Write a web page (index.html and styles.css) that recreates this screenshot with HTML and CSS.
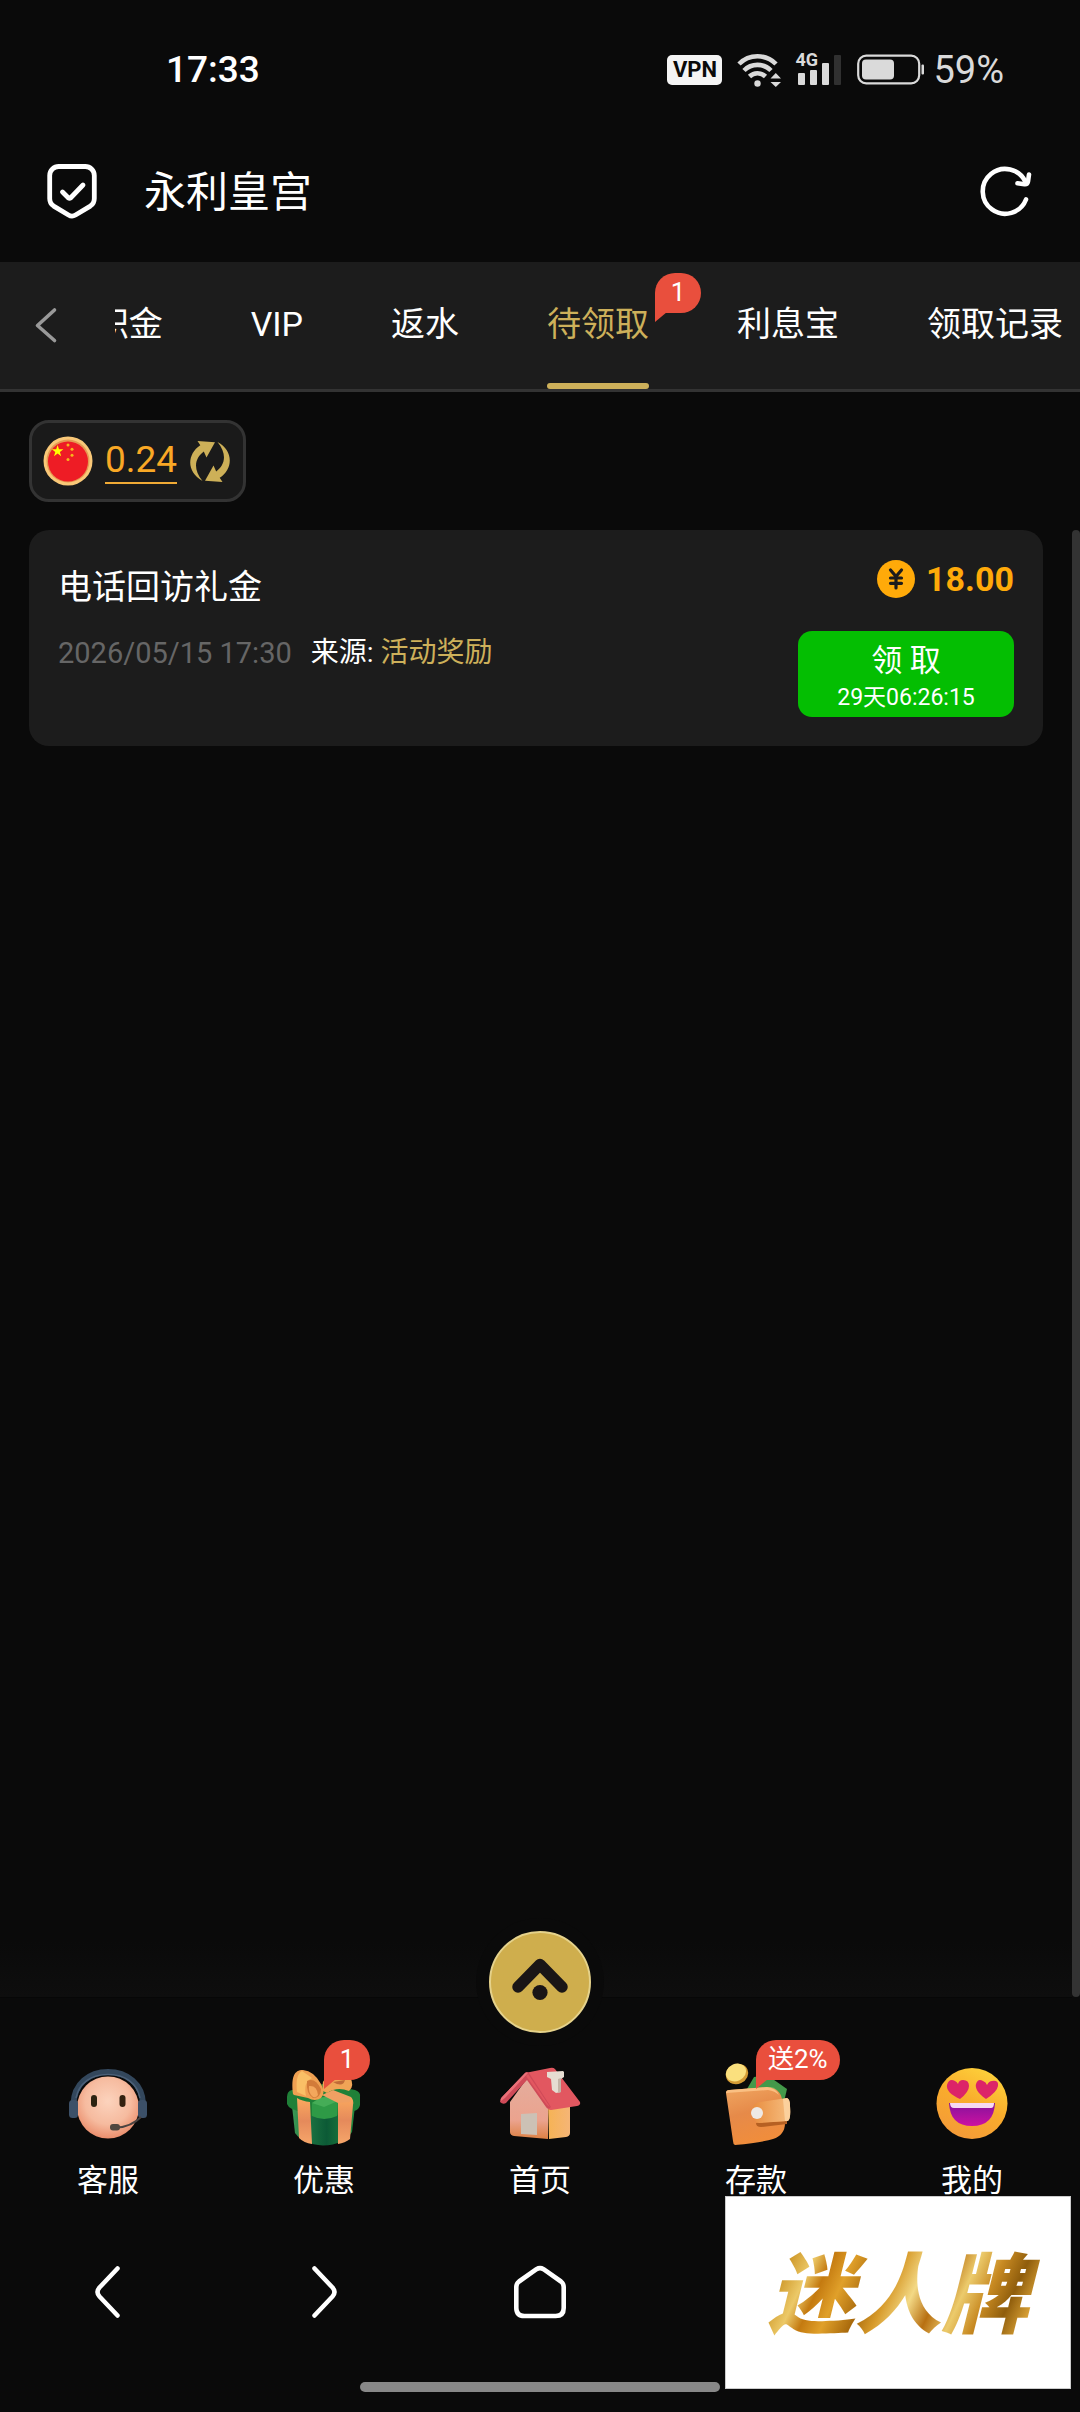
FILE: index.html
```html
<!DOCTYPE html>
<html lang="zh-CN">

<head>
    <meta charset="UTF-8">
    <meta name="viewport" content="width=device-width, initial-scale=1.0">
    <title>永利皇宫</title>
    <link rel="stylesheet" href="styles.css">
</head>

<body>
    <div class="status-bar">
        <span class="clock">17:33</span>
        <div class="status-icons">
            <span class="vpn">VPN</span>
            <svg class="wifi" width="44" height="34" viewBox="0 0 44 34" fill="none" stroke="#dadada" stroke-width="4.6">
                <path d="M2 11a26 26 0 0 1 37 0" />
                <path d="M7 17.500a19 19 0 0 1 27 0" />
                <path d="M12.500 23.500a11.500 11.500 0 0 1 16 0" />
                <circle cx="20.500" cy="30.500" r="3.200" fill="#dadada" stroke="none" />
                <path d="M33.500 25.500l5.300-5.500 5.200 5.500zM33.500 29l5.300 5 5.200-5z" fill="#dadada" stroke="none" />
            </svg>
            <span class="signal">
                <span class="signal-type">4G</span>
                <svg width="46" height="32" viewBox="0 0 46 32" fill="#dadada">
                    <rect x="3" y="19" width="7" height="12" rx="1" />
                    <rect x="15" y="16" width="7" height="15" rx="1" />
                    <rect x="27" y="9" width="7" height="22" rx="1" />
                    <rect x="39" y="1" width="7" height="30" rx="1" fill="#303030" />
                </svg>
            </span>
            <svg class="battery" width="68" height="32" viewBox="0 0 68 32">
                <rect x="1.200" y="1.700" width="61" height="27.600" rx="8" fill="none" stroke="#dadada" stroke-width="2.200" />
                <rect x="5" y="5.500" width="32" height="20" rx="4" fill="#dadada" />
                <rect x="64.500" y="10.500" width="2.500" height="10" rx="1" fill="#dadada" />
            </svg>
            <span class="percent">59%</span>
        </div>
    </div>

    <header class="site-header">
        <svg width="50" height="56" viewBox="0 0 50 56" fill="none" stroke="#fff" stroke-width="4.800" stroke-linecap="round" stroke-linejoin="round">
            <path d="M12 2.500H38a9 9 0 0 1 9.300 9V34.500c0 4-1.500 6-4 7.600L28.500 51q-3.500 2.200-7 0L6.700 42.100c-2.500-1.600-4-3.600-4-7.600V11.500a9 9 0 0 1 9.300-9z" />
            <path d="M15.500 28l6 6q1 .7 2 0L36 21" />
        </svg>
        <h1>永利皇宫</h1>
        <button class="icon-btn" type="button" aria-label="刷新">
            <svg width="52" height="52" viewBox="0 0 52 52" fill="none" stroke="#fff" stroke-width="4.600" stroke-linecap="round" stroke-linejoin="round">
                <path d="M46 33.500A22.400 22.400 0 1 1 45.500 16" />
                <path d="M49 8.500l-1 7q-.7 3-3.500 2.700l-7-1" />
            </svg>
        </button>
    </header>

    <nav class="tabs">
        <button class="icon-btn tabs-back" type="button" aria-label="返回">
            <svg width="24" height="38" viewBox="0 0 24 38" fill="none" stroke="#999" stroke-width="3.600" stroke-linecap="round" stroke-linejoin="round">
                <path d="M20.500 3L3.500 18.500 20.500 33.500" />
            </svg>
        </button>
        <div class="tabs-scroll">
            <a class="tab" href="#">公积金</a>
            <a class="tab" href="#">VIP</a>
            <a class="tab" href="#">返水</a>
            <a class="tab active" href="#">待领取<span class="badge tab-badge">1</span></a>
            <a class="tab" href="#">利息宝</a>
            <a class="tab" href="#">领取记录</a>
        </div>
    </nav>

    <main class="content">
        <div class="wallet">
            <svg width="50" height="50" viewBox="0 0 50 50">
                <circle cx="25" cy="25" r="24.500" fill="#f9c878" />
                <circle cx="25" cy="25" r="21.500" fill="#e59a52" />
                <circle cx="25" cy="25.500" r="20" fill="#ee1c25" />
                <path d="M14.600 9l1.400 4.200h4.400l-3.500 2.700 1.300 4.300-3.600-2.600-3.600 2.600 1.300-4.300-3.500-2.700h4.400z" fill="#ff0" />
                <g fill="#f8b61c">
                    <circle cx="25" cy="9" r="1.500" />
                    <circle cx="29" cy="13.200" r="1.500" />
                    <circle cx="29" cy="19.200" r="1.500" />
                    <circle cx="25" cy="23.500" r="1.500" />
                </g>
            </svg>
            <a class="balance" href="#">0.24</a>
            <button class="icon-btn" type="button" aria-label="刷新余额">
                <svg width="42" height="42" viewBox="0 0 42 42" fill="#cdb058">
                    <path d="M8.500 1L26 2.300 17.500 17.500 14.800 11.500C6 18 3.500 29 13.500 41 -3 32-2 14 11.300 5.200z" />
                    <path transform="rotate(180 21 21.500)" d="M8.500 1L26 2.300 17.500 17.500 14.800 11.500C6 18 3.500 29 13.500 41 -3 32-2 14 11.300 5.200z" />
                </svg>
            </button>
        </div>

        <div class="list-area">
            <div class="list">
                <article class="reward">
                    <div class="reward-info">
                        <h2>电话回访礼金</h2>
                        <p><time>2026/05/15 17:30</time><span>来源: <em>活动奖励</em></span></p>
                    </div>
                    <div class="reward-side">
                        <div class="amount">
                            <svg width="38" height="38" viewBox="0 0 38 38">
                                <circle cx="19" cy="19" r="19" fill="#ffaa09" />
                                <path d="M13.500 10l5.500 6.500L24.500 10M19 17v11M13.500 18h11M13.500 23.300h11" fill="none" stroke="#1c1c1c" stroke-width="3.200" stroke-linecap="round" stroke-linejoin="round" />
                            </svg>
                            <strong>18.00</strong>
                        </div>
                        <button class="claim" type="button">
                            <span>领 取</span>
                            <small>29天06:26:15</small>
                        </button>
                    </div>
                </article>
            </div>
            <div class="scroll-thumb"></div>
        </div>
    </main>

    <footer class="bottom">
        <button class="fab" type="button" aria-label="展开">
            <svg width="60" height="48" viewBox="0 0 60 48">
                <path d="M8 29L30 6.500 52 29" fill="none" stroke="#1a1516" stroke-width="11.500" stroke-linecap="round" stroke-linejoin="round" />
                <circle cx="30" cy="34.500" r="7.600" fill="#1a1516" />
            </svg>
        </button>

        <nav class="menu">
            <a class="menu-item" href="#">
                <svg width="86" height="86" viewBox="0 0 86 86">
                    <defs>
                        <radialGradient id="skin" cx=".5" cy=".4" r=".62">
                            <stop offset="0" stop-color="#fcd3bd" />
                            <stop offset=".6" stop-color="#f6bb9f" />
                            <stop offset="1" stop-color="#e98a68" />
                        </radialGradient>
                    </defs>
                    <path d="M8.500 44C9 24 24 12 43 12s34.500 12 35 32" fill="none" stroke="#33475c" stroke-width="6" />
                    <path d="M11 38C14 23 26 14.500 43 14.500S72 23 75 38" fill="none" stroke="#4b6078" stroke-width="1.500" />
                    <circle cx="43" cy="47.500" r="31" fill="url(#skin)" />
                    <rect x="4" y="40" width="9" height="18" rx="3.500" fill="#3c5068" />
                    <rect x="73" y="40" width="9" height="18" rx="3.500" fill="#3c5068" />
                    <rect x="26" y="35" width="6" height="12" rx="3" fill="#2c2412" />
                    <rect x="54.500" y="35" width="6" height="12" rx="3" fill="#33210f" />
                    <path d="M76 57C69 64 61 67 52 67.500" fill="none" stroke="#4a4341" stroke-width="2" />
                    <rect x="45" y="64" width="10" height="6.500" rx="3" fill="#514840" />
                </svg>
                <span>客服</span>
            </a>
            <a class="menu-item" href="#">
                <svg width="86" height="86" viewBox="0 0 86 86">
                    <defs>
                        <linearGradient id="boxFront" x1="0" x2="1" y1="0" y2="0">
                            <stop offset="0" stop-color="#3d9a55" />
                            <stop offset=".3" stop-color="#1a7040" />
                            <stop offset=".55" stop-color="#0c5a36" />
                            <stop offset="1" stop-color="#238a3f" />
                        </linearGradient>
                        <linearGradient id="ribbon" x1="0" x2="0" y1="0" y2="1">
                            <stop offset="0" stop-color="#fba95e" />
                            <stop offset=".5" stop-color="#e58a5b" />
                            <stop offset="1" stop-color="#f6a66a" />
                        </linearGradient>
                    </defs>
                    <path d="M11 46h63l-3 26q-8 13-29 13.500Q22 84 14 73z" fill="url(#boxFront)" />
                    <path d="M6 37q0-6 5-7l31-6 32 6q6 2 5 7v8q-1 5-6 6l-19 5q-11 4-23 0L11 49q-4-2-5-5z" fill="#1f8038" />
                    <path d="M31 43l7-5 10-2 9 5-1 15q-13 6-25 0z" fill="#2e9a46" />
                    <path d="M31 43l8-5 9-2 9 5-14 6z" fill="#45ad57" />
                    <path d="M16 38q5 3 13 4l2 42q-8-1-13-6z" fill="url(#ribbon)" />
                    <path d="M57 41l13-4q3 3 2 8l-3 34q-5 4-12 5z" fill="url(#ribbon)" />
                    <path d="M41 35l11-5 18 7-1 5-12 1z" fill="#f0a063" />
                    <path d="M12 34C10 17 13 10 22 10q11 1 18 14 5 9 0 14-6 4-13 0l-14-3z" fill="#efa052" />
                    <path d="M21 11q-7 4-5 21l9 4q-3-14 6-18z" fill="#fabf66" />
                    <path d="M26 21q8-4 14 8 0 9-8 9-7-4-6-17z" fill="#d27b39" />
                    <path d="M28 26q8-1 9 9-2 3-5 2-5-4-4-11z" fill="#f3a75c" />
                    <path d="M42 31q-2-12 5-14h22q5 9-1 14-12-5-22 2z" fill="#f0a456" />
                    <path d="M52 22l12-2q-2 8-12 2z" fill="#c06b38" />
                </svg>
                <span>优惠</span>
                <span class="badge menu-badge">1</span>
            </a>
            <a class="menu-item" href="#">
                <svg width="86" height="86" viewBox="0 0 86 86">
                    <defs>
                        <linearGradient id="wall" x1="0" x2="0" y1="0" y2="1">
                            <stop offset="0" stop-color="#e4ad9e" />
                            <stop offset=".7" stop-color="#eba38e" />
                            <stop offset="1" stop-color="#dc8144" />
                        </linearGradient>
                        <linearGradient id="side" x1="0" x2="1" y1="0" y2="0">
                            <stop offset="0" stop-color="#f6b355" />
                            <stop offset="1" stop-color="#f5b576" />
                        </linearGradient>
                    </defs>
                    <path d="M51 43l22 3v27q0 3-4 4l-17 2z" fill="url(#side)" />
                    <path d="M13 42L31 17l20 29v33l-34-3q-4-1-4-4z" fill="url(#wall)" />
                    <path d="M28 13l25-5q3-1 5 1l25 33q1 3-3 4l-26 4q-3 0-4-3L31 18z" fill="#e25760" />
                    <path d="M28 13q2-2 4 0l22 34q-3 3-5 0L30 20 9 43q-3 2-6-1 0-3 2-5z" fill="#cf4a58" />
                    <path d="M28 13q1-1 3 0L8 38l-4 3q-1-2 1-4z" fill="#ea7078" />
                    <path d="M31 14L53 47l-3-2L29 16z" fill="#e25760" />
                    <path d="M24 54l16-1v22l-16-1z" fill="#ccc1b5" />
                    <path d="M50 12l16-1 1 1v5l-3 2v13l-5 1-4-3-1-11-4-2z" fill="#e6ddd2" />
                    <path d="M61 19l3-1v14l-3 1z" fill="#c4b5a7" />
                </svg>
                <span>首页</span>
            </a>
            <a class="menu-item" href="#">
                <svg width="86" height="86" viewBox="0 0 86 86">
                    <defs>
                        <linearGradient id="leather" x1="0" x2=".3" y1="0" y2="1">
                            <stop offset="0" stop-color="#f0a762" />
                            <stop offset=".5" stop-color="#e68a49" />
                            <stop offset="1" stop-color="#f08d3c" />
                        </linearGradient>
                        <linearGradient id="strap" x1="0" x2="1" y1="0" y2="0">
                            <stop offset="0" stop-color="#e98e40" />
                            <stop offset="1" stop-color="#f6be80" />
                        </linearGradient>
                    </defs>
                    <ellipse cx="24" cy="14" rx="11.500" ry="10" transform="rotate(-25 24 14)" fill="#d49b35" />
                    <ellipse cx="23" cy="12.500" rx="10.500" ry="8.500" transform="rotate(-25 23 12.500)" fill="#fae07e" />
                    <path d="M34 29l7-12 13-2 20 14-4 17H50z" fill="#43994a" />
                    <path d="M50 30q12-9 18 8l-4 6z" fill="#7cc468" />
                    <path d="M13 33q0-3 3-3l38-3q13 1 15 12l3 24q0 12-12 16-9 3-38 6-2-1-2-4z" fill="url(#leather)" />
                    <path d="M17 30l37-3q9 1 12 8-4-4-11-5l-42 3q0-3 4-3z" fill="#fac083" />
                    <path d="M43 63l31-2v3l-26 3q-5 0-5-4z" fill="#b66022" />
                    <path d="M40 47q2-5 8-5l26-4q3 1 3 8 1 13-2 15l-29 2q-7-1-6-16z" fill="url(#strap)" />
                    <path d="M70 39l4-1q3 1 3 8 1 13-2 15h-3z" fill="#fbd09c" />
                    <circle cx="44" cy="53" r="6" fill="#eee9e5" />
                </svg>
                <span>存款</span>
                <span class="badge menu-badge">送2%</span>
            </a>
            <a class="menu-item" href="#">
                <svg width="86" height="86" viewBox="0 0 86 86">
                    <defs>
                        <linearGradient id="face" x1=".8" x2=".3" y1="0" y2="1">
                            <stop offset="0" stop-color="#fdd43c" />
                            <stop offset=".5" stop-color="#f9ac2c" />
                            <stop offset="1" stop-color="#f49a38" />
                        </linearGradient>
                        <linearGradient id="mouth" x1="0" x2="0" y1="0" y2="1">
                            <stop offset="0" stop-color="#86129c" />
                            <stop offset="1" stop-color="#cc11a1" />
                        </linearGradient>
                    </defs>
                    <circle cx="43" cy="43.500" r="35.500" fill="url(#face)" />
                    <path d="M31 39C22 35 17 30 18 25q2-7 8-4 2 1 3 3 1-4 5-4 6 0 6 6 0 6-9 13z" fill="#dc2468" />
                    <path d="M57 39C48 33 46 27 47 24q2-6 7-3 3 1 4 4 2-4 5-4 7-1 6 5-1 6-12 13z" fill="#dc2468" />
                    <path d="M20 43h46q-1 23-23 23T20 43z" fill="url(#mouth)" />
                    <path d="M21 43h44q0 5-3 5H25q-4 0-4-5z" fill="#f6d9f2" />
                </svg>
                <span>我的</span>
            </a>
        </nav>

        <nav class="browser-nav">
            <button class="icon-btn" type="button" aria-label="后退">
                <svg width="54" height="54" viewBox="0 0 54 54" fill="none" stroke="#fff" stroke-width="4.500" stroke-linecap="round" stroke-linejoin="round">
                    <path d="M36.500 3.500L18.500 22.500q-4 4.500 0 9L36.500 50.500" />
                </svg>
            </button>
            <button class="icon-btn" type="button" aria-label="前进">
                <svg width="54" height="54" viewBox="0 0 54 54" fill="none" stroke="#fff" stroke-width="4.500" stroke-linecap="round" stroke-linejoin="round">
                    <path d="M17.500 3.500L35.500 22.500q4 4.500 0 9L17.500 50.500" />
                </svg>
            </button>
            <button class="icon-btn" type="button" aria-label="主页">
                <svg width="54" height="54" viewBox="0 0 54 54" fill="none" stroke="#fff" stroke-width="4.600" stroke-linejoin="round">
                    <path d="M23.500 4.200q3.500-2.200 7 0L48 16.500q2.700 2 2.700 5.500V43q0 8-8 8H11.300q-8 0-8-8V22q0-3.500 2.700-5.500z" />
                </svg>
            </button>
        </nav>
        <div class="home-bar"></div>
        <div class="watermark"><span>迷人牌</span></div>
    </footer>
</body>

</html>
```
FILE: styles.css
```css
* {
    box-sizing: border-box;
    margin: 0;
    padding: 0;
}

body {
    display: flex;
    flex-direction: column;
    min-height: 100vh;
    background: #0a0a0a;
    color: #fff;
    font-family: Roboto, "Noto Sans CJK SC", sans-serif;
    overflow-x: hidden;
}

svg {
    display: block;
    flex-shrink: 0;
}

a {
    color: inherit;
    text-decoration: none;
}

button {
    border: none;
    background: none;
    color: inherit;
    font-family: inherit;
    cursor: pointer;
}

.icon-btn {
    display: flex;
    align-items: center;
    justify-content: center;
}

/* status bar */
.status-bar {
    display: flex;
    align-items: center;
    justify-content: space-between;
    padding: 48px 76px 0 166px;
    line-height: 44px;
    font-size: 38px;
}

.clock {
    font-size: 37px;
    font-weight: 500;
}

.status-icons {
    display: flex;
    align-items: center;
    color: #dadada;
}

.vpn {
    width: 55px;
    border-radius: 5px;
    background: #f4f4f4;
    color: #0a0a0a;
    font-size: 22px;
    font-weight: 700;
    line-height: 30px;
    text-align: center;
}

.wifi {
    margin-left: 15px;
}

.signal {
    position: relative;
    margin-left: 14px;
}

.signal-type {
    position: absolute;
    top: -4px;
    left: 0;
    font-size: 18px;
    font-weight: 700;
    line-height: 20px;
}

.battery {
    margin: 0 8px 0 16px;
}

/* header */
.site-header {
    display: flex;
    align-items: center;
    padding: 70px 48px 40px 47px;
}

.site-header h1 {
    flex: 1;
    padding: 2px 0 0 47px;
    font-size: 42px;
    font-weight: 400;
    line-height: 58px;
}

/* tabs */
.tabs {
    display: flex;
    height: 130px;
    background: #1c1c1c;
    border-bottom: 3px solid #333;
}

.tabs-back {
    width: 115px;
    padding: 0 46px 0 22px;
}

.tabs-scroll {
    display: flex;
    flex: 1;
    justify-content: flex-end;
    gap: 88px;
    min-width: 0;
    padding-right: 17px;
    overflow: hidden;
}

.tab {
    position: relative;
    flex-shrink: 0;
    padding-top: 37px;
    font-size: 34px;
    line-height: 50px;
}

.tab.active {
    color: #cdb05a;
}

.tab.active::after {
    content: "";
    position: absolute;
    right: 0;
    bottom: 0;
    left: 0;
    height: 6px;
    border-radius: 3px;
    background: #cdb05a;
}

.badge {
    position: absolute;
    min-width: 46px;
    height: 40px;
    padding: 0 12px;
    border-radius: 20px 20px 20px 0;
    background: #e94f3d;
    color: #fff;
    font-size: 26px;
    line-height: 38px;
    text-align: center;
    white-space: nowrap;
}

.badge::after {
    content: "";
    position: absolute;
    left: 0;
    top: 39px;
    border-top: 10px solid #e94f3d;
    border-right: 12px solid transparent;
}

.tab-badge {
    top: 11px;
    left: 108px;
}

/* content */
.content {
    display: flex;
    flex: 1;
    flex-direction: column;
    align-items: flex-start;
    gap: 28px;
    padding: 28px 0 0 29px;
}

.wallet {
    display: flex;
    align-items: center;
    gap: 12px;
    height: 82px;
    padding: 0 12px 0 11px;
    border: 3px solid #333;
    border-radius: 20px;
    background: #1a1a1a;
}

.balance {
    border-bottom: 2px solid #f0aa35;
    color: #f9a825;
    font-size: 37px;
    line-height: 44px;
}

.list-area {
    display: flex;
    flex: 1;
    align-self: stretch;
    gap: 29px;
}

.list {
    flex: 1;
}

.scroll-thumb {
    width: 8px;
    border-radius: 4px;
    background: #333;
}

.reward {
    display: flex;
    justify-content: space-between;
    padding: 29px;
    border-radius: 20px;
    background: #1c1c1c;
}

.reward h2 {
    padding-top: 3px;
    font-size: 34px;
    font-weight: 400;
    line-height: 50px;
}

.reward p {
    display: flex;
    gap: 19px;
    margin-top: 20px;
    font-size: 28px;
    line-height: 42px;
}

.reward time {
    color: #666;
    font-size: 29px;
}

.reward em {
    color: #cdb05a;
    font-style: normal;
}

.reward-side {
    width: 216px;
}

.amount {
    display: flex;
    align-items: center;
    justify-content: flex-end;
    gap: 11px;
    color: #ffaa09;
    font-size: 34px;
    line-height: 40px;
}

.claim {
    width: 100%;
    height: 86px;
    margin-top: 32px;
    padding-top: 5px;
    border-radius: 14px;
    background: #04be02;
}

.claim span,
.claim small {
    display: block;
    font-size: 31px;
    line-height: 42px;
}

.claim small {
    font-size: 23px;
    line-height: 32px;
}

/* bottom menu */
.bottom {
    position: relative;
    padding: 63px 0 20px;
}

.bottom::before {
    content: "";
    position: absolute;
    top: -56px;
    left: 0;
    right: 8px;
    height: 56px;
    background: linear-gradient(rgba(14, 14, 14, 0), #0e0e0e);
    border-bottom: 1px solid #070707;
}

.fab {
    position: absolute;
    top: -66px;
    left: calc(50% - 51px);
    display: flex;
    align-items: center;
    justify-content: center;
    width: 102px;
    height: 102px;
    border: 2px solid #e5d28b;
    border-radius: 50%;
    background: #cfae4d;
    box-shadow: 0 0 0 13px #0a0a0a;
}

.menu {
    display: grid;
    grid-template-columns: repeat(5, 1fr);
}

.menu-item {
    position: relative;
    display: flex;
    flex-direction: column;
    align-items: center;
    gap: 15px;
    font-size: 31px;
    line-height: 40px;
}

.menu-badge {
    top: -20px;
    left: 50%;
}

.browser-nav {
    display: grid;
    grid-template-columns: repeat(5, 1fr);
    margin: 64px 0 63px;
}

.home-bar {
    width: 33.33%;
    height: 10px;
    margin: 0 auto;
    border-radius: 5px;
    background: #888;
}

.watermark {
    position: absolute;
    right: 9px;
    bottom: 23px;
    display: flex;
    align-items: center;
    justify-content: center;
    width: 346px;
    height: 193px;
    border: 1px solid #ccc;
    background: #fff;
}

.watermark span {
    padding: 6px 20px 0;
    background: linear-gradient(115deg, #a8690c 5%, #c98f1e 14%, #ecc968 22%, #c47a10 27%, #e0a02a 33%, #a8690c 41%, #d79a2a 47%, #f3d985 54%, #b87012 61%, #eccb6c 68%, #c88a22 75%, #8f5d0c 82%, #d9a136 89%, #8a570a);
    background-clip: text;
    -webkit-background-clip: text;
    color: transparent;
    font-size: 87px;
    font-style: italic;
    font-weight: 900;
    line-height: 120px;
}
```
